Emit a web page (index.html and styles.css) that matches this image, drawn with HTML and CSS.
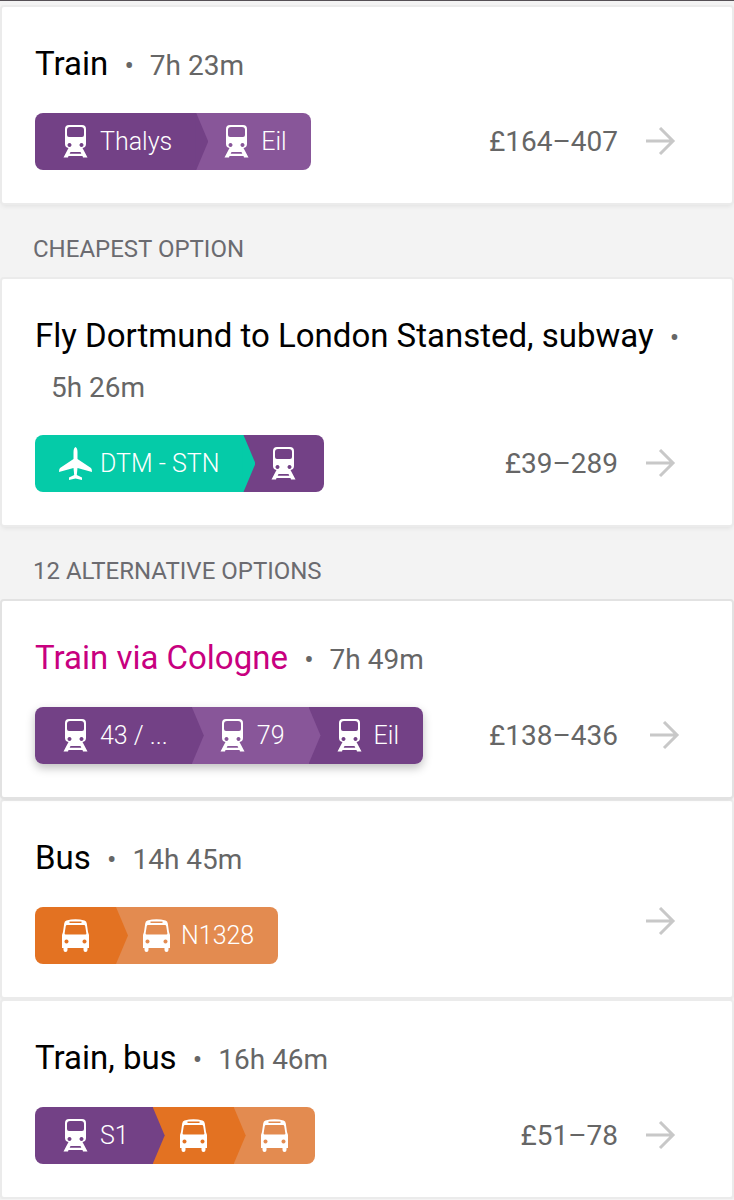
FILE: index.html
```
<!DOCTYPE html>
<html lang="en">
<head>
    <meta charset="UTF-8">
    <meta name="viewport" content="width=device-width, initial-scale=1.0">
    <title>Travel options</title>
    <link rel="stylesheet" href="styles.css">
</head>
<body>
    <!-- Shared icons -->
    <svg class="sprite" aria-hidden="true">
        <symbol id="train" viewBox="0 0 33 33">
            <path fill-rule="evenodd" d="M10 0h13q4 0 4 4v15q0 3.500-3.500 4l5 9.500H24l-.5-1.500h-14L9 32.500H4.500l5-9.500Q6 22.500 6 19V4q0-4 4-4zM11 2Q8 2 8 5v5q0 2 2 2h13q2 0 2-2V5q0-3-3-3zM10.500 18a2 2 0 1 0 .01 0zM22.500 18a2 2 0 1 0 .01 0zM11.500 27l-.8 1.800h11.600l-.8-1.800z"/>
        </symbol>
        <symbol id="bus" viewBox="0 0 33 33">
            <path fill-rule="evenodd" d="M7.500 1.500Q16.500-1 25.500 1.500q2 .7 2.300 3L29 13l1 3v13h-1.500v2q0 2-2 2t-2-2v-2h-16v2q0 2-2 2t-2-2v-2H3V16l1-3 1.200-8.500Q5.500 2.200 7.500 1.500zM10.500 2.500v1.500h12V2.500zM8 6q-1 0-1.200 1L5.600 14.500q0 1 1 1h19.800q1 0 1-1L26.200 7q-.2-1-1.200-1zM7.500 20.500a2 2 0 1 0 .01 0zM25.500 20.500a2 2 0 1 0 .01 0z"/>
        </symbol>
        <symbol id="plane" viewBox="0 0 33 33">
            <path d="M16.500 0q2 1 2 5v7L32 21q1 1 1 4l-14.500-4-.7 7 5.200 2.500V33l-6.500-1.500L10 33v-2.500l5.200-2.500-.7-7L0 25q0-3 1-4l13.500-9V5q0-4 2-5z"/>
        </symbol>
        <symbol id="arrow" viewBox="0 0 30 30">
            <path d="M0 14h27M14 1l13 13-13 13" fill="none" stroke="currentColor" stroke-width="3"/>
        </symbol>
    </svg>

    <main class="results">
        <a class="card" href="#train-direct">
            <div class="heading"><span class="title">Train</span> <span class="dot">•</span><span class="duration">7h 23m</span></div>
            <div class="details">
                <div class="route">
                    <span class="leg rail"><svg class="icon"><use href="#train"/></svg>Thalys</span>
                    <span class="leg rail-light"><svg class="icon"><use href="#train"/></svg>Eil</span>
                </div>
                <span class="price">£164–407</span>
                <svg class="arrow"><use href="#arrow"/></svg>
            </div>
        </a>

        <h2 class="section">CHEAPEST OPTION</h2>
        <a class="card" href="#fly">
            <div class="heading"><span class="title">Fly Dortmund to London Stansted, subway</span> <span class="dot">•</span><span class="duration">5h 26m</span></div>
            <div class="details">
                <div class="route">
                    <span class="leg air"><svg class="icon"><use href="#plane"/></svg>DTM - STN</span>
                    <span class="leg rail"><svg class="icon"><use href="#train"/></svg></span>
                </div>
                <span class="price">£39–289</span>
                <svg class="arrow"><use href="#arrow"/></svg>
            </div>
        </a>

        <h2 class="section">12 ALTERNATIVE OPTIONS</h2>
        <a class="card active" href="#train-cologne">
            <div class="heading"><span class="title">Train via Cologne</span> <span class="dot">•</span><span class="duration">7h 49m</span></div>
            <div class="details">
                <div class="route">
                    <span class="leg rail"><svg class="icon"><use href="#train"/></svg>43 / ...</span>
                    <span class="leg rail-light"><svg class="icon"><use href="#train"/></svg>79</span>
                    <span class="leg rail"><svg class="icon"><use href="#train"/></svg>Eil</span>
                </div>
                <span class="price">£138–436</span>
                <svg class="arrow"><use href="#arrow"/></svg>
            </div>
        </a>
        <a class="card" href="#bus-direct">
            <div class="heading"><span class="title">Bus</span> <span class="dot">•</span><span class="duration">14h 45m</span></div>
            <div class="details no-price">
                <div class="route">
                    <span class="leg road"><svg class="icon"><use href="#bus"/></svg></span>
                    <span class="leg road-light"><svg class="icon"><use href="#bus"/></svg>N1328</span>
                </div>
                <svg class="arrow"><use href="#arrow"/></svg>
            </div>
        </a>
        <a class="card" href="#train-bus">
            <div class="heading"><span class="title">Train, bus</span> <span class="dot">•</span><span class="duration">16h 46m</span></div>
            <div class="details">
                <div class="route">
                    <span class="leg rail"><svg class="icon"><use href="#train"/></svg>S1</span>
                    <span class="leg road"><svg class="icon"><use href="#bus"/></svg></span>
                    <span class="leg road-light"><svg class="icon"><use href="#bus"/></svg></span>
                </div>
                <span class="price">£51–78</span>
                <svg class="arrow"><use href="#arrow"/></svg>
            </div>
        </a>
    </main>
</body>
</html>
```
FILE: styles.css
```
* {
    box-sizing: border-box;
}

body {
    margin: 0;
    background-color: #f3f3f3;
    color: #666;
    font-family: Roboto, 'Liberation Sans', sans-serif;
}

.sprite {
    display: none;
}

.results {
    border-top: 1px solid #555055;
    padding: 6px 2px 2px;
}

.card {
    display: block;
    padding: 32px 33px 33px;
    background-color: #fff;
    border-radius: 2px;
    box-shadow: 0 0 0 2px #ebebeb, 0 3px 5px rgba(0, 0, 0, 0.08);
    color: #666;
    text-decoration: none;
}

.card + .card {
    margin-top: 4px;
}

.heading {
    margin-bottom: 24px;
    font-size: 33px;
    line-height: 50px;
}

.heading span {
    line-height: 1;
}

.title {
    color: #000;
}

.dot {
    margin-left: 8px;
    font-size: 28px;
}

.duration {
    display: inline-block;
    margin-left: 16px;
    font-size: 28px;
    white-space: nowrap;
}

.details {
    display: flex;
    align-items: center;
    padding-right: 23px;
}

.route {
    display: flex;
    margin-right: auto;
    border-radius: 8px;
    overflow: hidden;
}

/* One leg of the trip, its tip points into the next leg */
.leg {
    position: relative;
    display: flex;
    align-items: center;
    gap: 8px;
    height: 57px;
    padding: 0 24px;
    color: #fff;
    font-size: 25px;
    font-weight: 300;
}

.leg:not(:last-child)::after {
    content: "";
    position: absolute;
    z-index: 1;
    top: 0;
    right: -12px;
    width: 13px;
    height: 100%;
    background-color: inherit;
    clip-path: polygon(0 0, 1px 0, 100% 50%, 1px 100%, 0 100%);
}

.rail {
    background-color: #734186;
}

.rail-light {
    background-color: #885699;
}

.air {
    background-color: #05cba8;
}

.road {
    background-color: #e37222;
}

.road-light {
    background-color: #e38b50;
}

.icon {
    width: 33px;
    height: 33px;
    fill: currentColor;
}

.price {
    font-size: 28px;
}

.arrow {
    width: 30px;
    height: 30px;
    margin-left: 28px;
    color: #c8c8c8;
}

.no-price .arrow {
    align-self: flex-start;
}

.section {
    margin: 0;
    padding: 16px 31px 0;
    font-size: 24px;
    font-weight: 400;
    line-height: 60px;
    color: #6b6b70;
}

.active {
    position: relative;
    box-shadow: 0 0 0 2px #e2e2e2, 0 2px 4px rgba(0, 0, 0, 0.1);
}

.active .title {
    color: #c8007f;
}

.active .route {
    box-shadow: 0 4px 10px rgba(0, 0, 0, 0.25);
}

.active .arrow {
    margin-right: -4px;
    margin-left: 32px;
}
```
